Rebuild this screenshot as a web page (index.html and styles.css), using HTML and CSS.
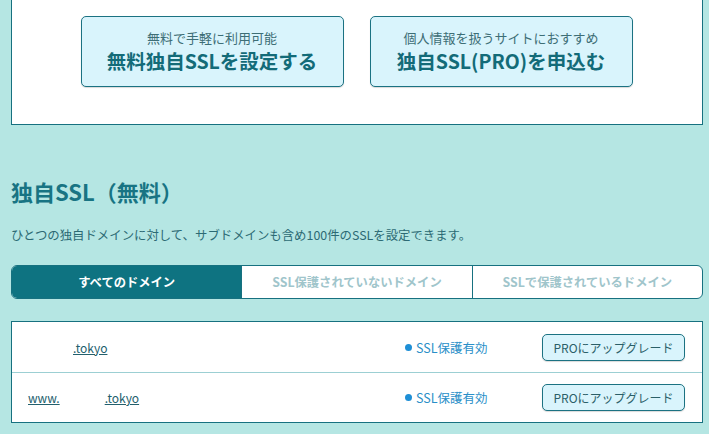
FILE: index.html
```html
<!DOCTYPE html>
<html lang="ja">
<head>
<meta charset="utf-8">
<link rel="stylesheet" href="styles.css">
</head>
<body>
<div class="page">
  <div class="card">
    <a class="cta" href="#">
      <span class="cta-sub">無料で手軽に利用可能</span>
      <span class="cta-main">無料独自SSLを設定する</span>
    </a>
    <a class="cta" href="#">
      <span class="cta-sub">個人情報を扱うサイトにおすすめ</span>
      <span class="cta-main">独自SSL(PRO)を申込む</span>
    </a>
  </div>

  <h2 class="heading">独自SSL（無料）</h2>
  <p class="desc">ひとつの独自ドメインに対して、サブドメインも含め100件のSSLを設定できます。</p>

  <div class="tabs">
    <div class="tab active">すべてのドメイン</div>
    <div class="tab">SSL保護されていないドメイン</div>
    <div class="tab">SSLで保護されているドメイン</div>
  </div>

  <div class="table">
    <div class="row">
      <div class="domain"><span class="blank w1"></span><a href="#">.tokyo</a></div>
      <div class="status"><span class="dot"></span>SSL保護有効</div>
      <button class="upgrade">PROにアップグレード</button>
    </div>
    <div class="row">
      <div class="domain"><a href="#">www.</a><span class="blank w2"></span><a href="#">.tokyo</a></div>
      <div class="status"><span class="dot"></span>SSL保護有効</div>
      <button class="upgrade">PROにアップグレード</button>
    </div>
  </div>
</div>
</body>
</html>
```

FILE: styles.css
```css
* { box-sizing: border-box; }
html, body {
  margin: 0;
  padding: 0;
  background: #b5e6e3;
  font-family: "Noto Sans CJK JP", "Noto Sans", sans-serif;
}
.page {
  padding-left: 11px;
  width: 703px;
}
.card {
  background: #fff;
  border: 1px solid #177180;
  border-top: none;
  height: 125px;
  display: flex;
  justify-content: center;
  gap: 26px;
  padding-top: 16px;
  padding-right: 1px;
}
.cta {
  width: 263px;
  height: 71px;
  background: #d9f4fc;
  border: 1px solid #1b7282;
  border-radius: 5px;
  box-shadow: 0 1px 1px rgba(0,0,0,0.15);
  display: flex;
  flex-direction: column;
  align-items: center;
  justify-content: center;
  text-decoration: none;
  padding-bottom: 2px;
}
.cta-sub {
  font-size: 13px;
  line-height: 19px;
  color: #3d6e76;
}
.cta-main {
  font-size: 19.5px;
  line-height: 27px;
  font-weight: bold;
  color: #136b78;
}
.heading {
  margin: 0;
  padding-top: 51px;
  font-size: 22px;
  line-height: 30px;
  font-weight: bold;
  color: #187483;
}
.desc {
  margin: 0;
  padding-top: 20px;
  font-size: 12.4px;
  line-height: 18px;
  color: #2c6a74;
}
.tabs {
  margin-top: 21px;
  display: flex;
  height: 34px;
  border: 1px solid #177180;
  border-radius: 6px;
  overflow: hidden;
  background: #fff;
}
.tab {
  flex: 1;
  display: flex;
  align-items: center;
  justify-content: center;
  font-size: 12.3px;
  font-weight: bold;
  color: #a0c5cb;
}
.tab + .tab { border-left: 1px solid #177180; }
.tab.active {
  background: #0e7381;
  color: #fff;
}
.table {
  margin-top: 22px;
  background: #fff;
  border: 1px solid #177180;
}
.row {
  display: flex;
  align-items: center;
  height: 50px;
  padding-left: 16px;
}
.row + .row {
  border-top: 1px solid #9ccfd3;
}
.domain {
  width: 377px;
  font-size: 12px;
  display: flex;
  align-items: center;
}
.domain a {
  color: #23606d;
  text-decoration: underline;
}
.blank { display: inline-block; }
.w1 { width: 45px; }
.w2 { width: 45px; }
.status {
  width: 137px;
  font-size: 12.5px;
  color: #2a8fc8;
  display: flex;
  align-items: center;
}
.dot {
  width: 7px;
  height: 7px;
  border-radius: 50%;
  background: #1e8fd6;
  margin-right: 4px;
}
.upgrade {
  width: 143px;
  height: 27px;
  background: #d9f4fc;
  border: 1px solid #1b7282;
  border-radius: 5px;
  box-shadow: 0 1px 1px rgba(0,0,0,0.15);
  font-family: "Noto Sans CJK JP", "Noto Sans", sans-serif;
  font-size: 12px;
  color: #2b5f68;
  padding: 0;
}
```
